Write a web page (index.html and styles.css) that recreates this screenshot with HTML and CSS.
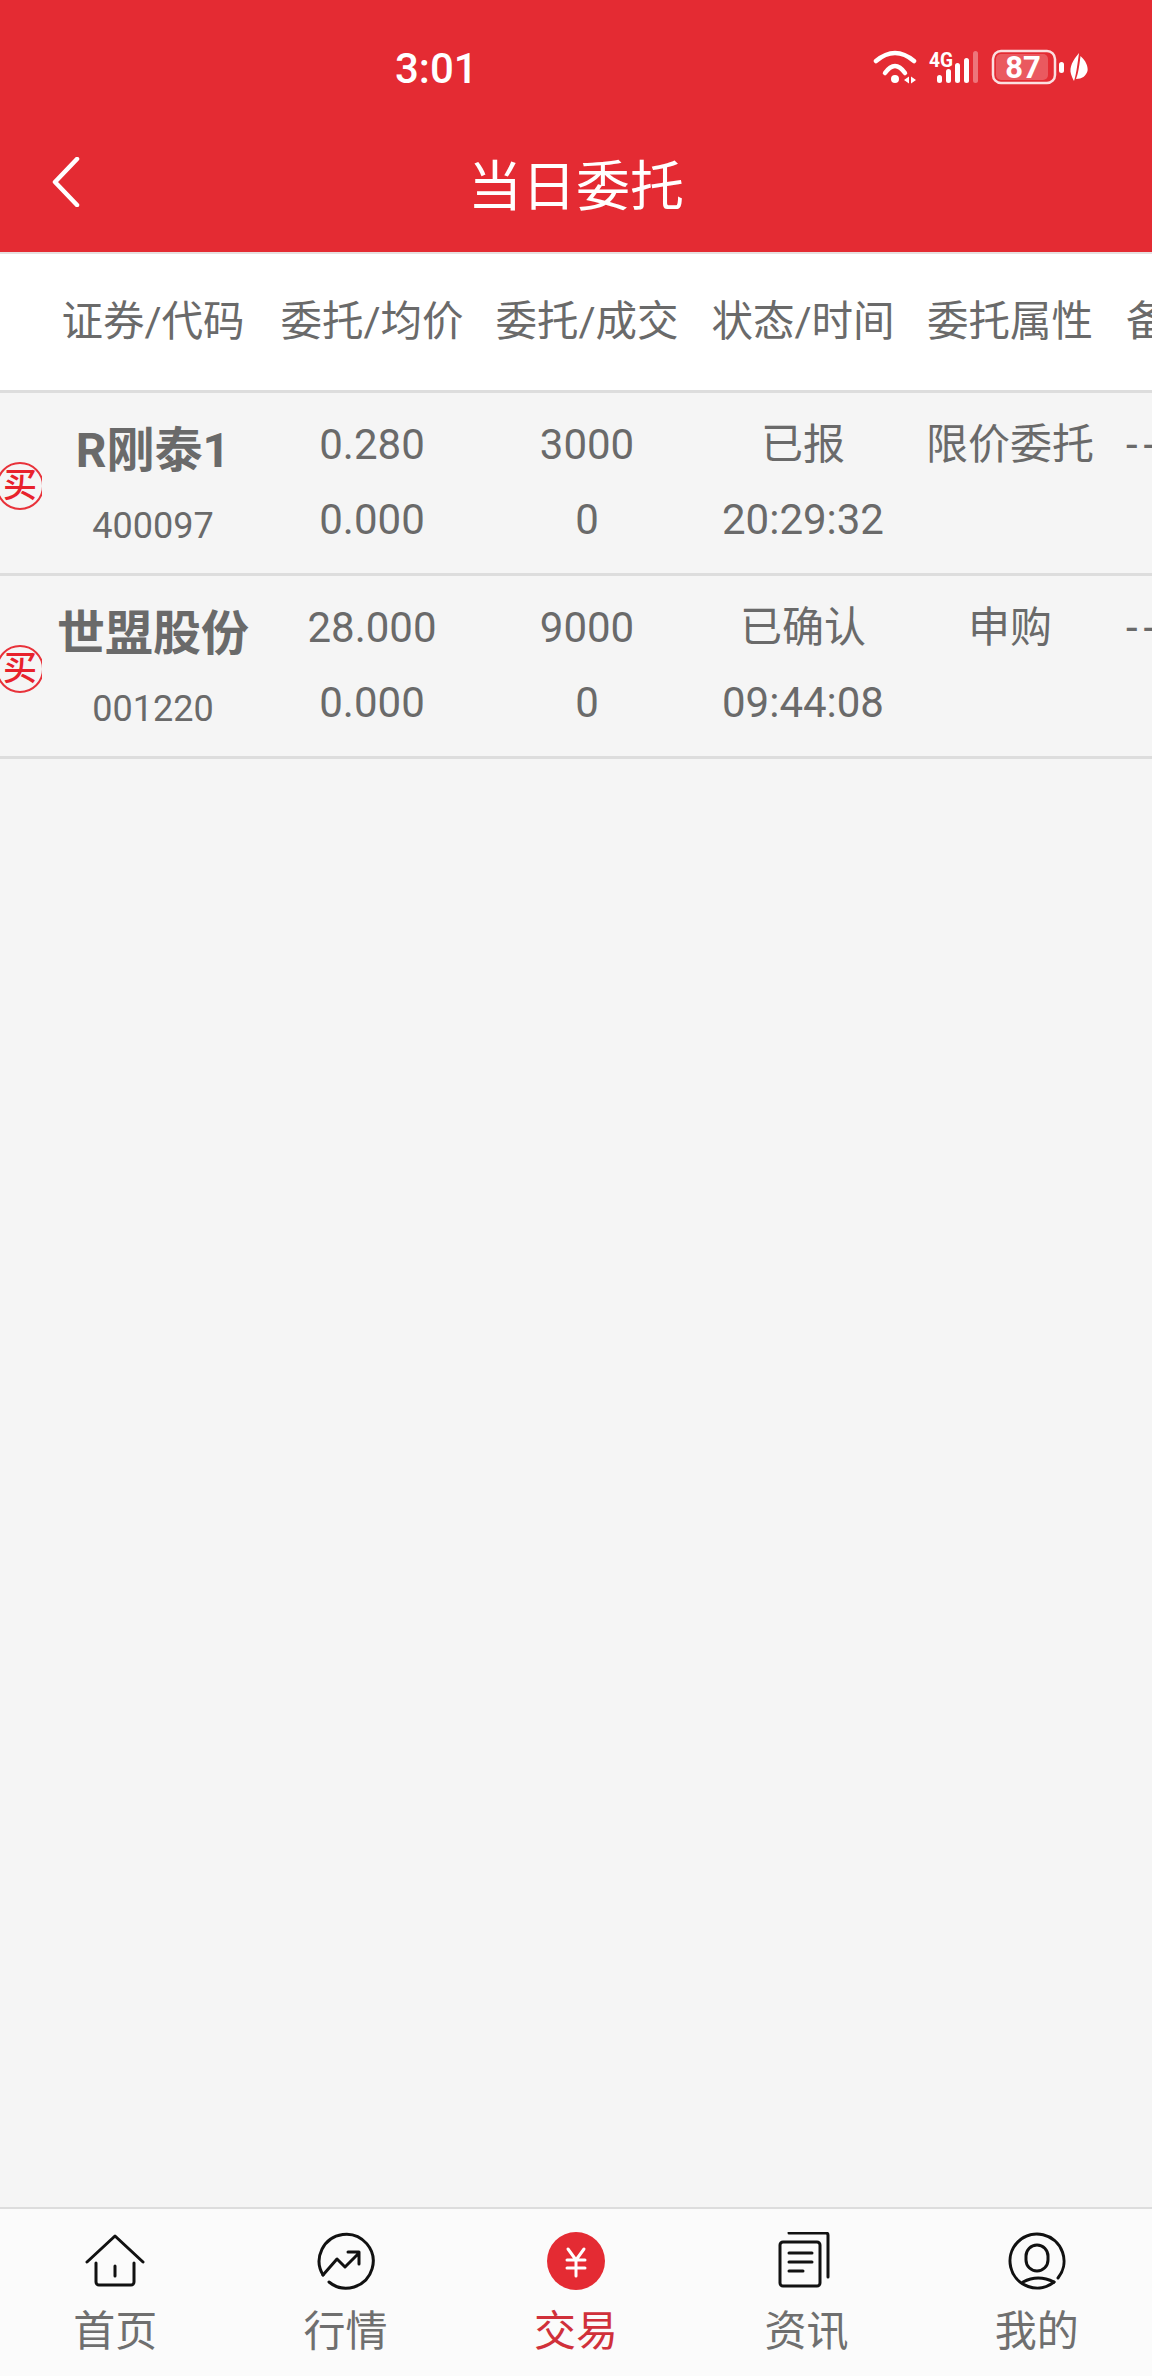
FILE: index.html
```html
<!DOCTYPE html>
<html lang="zh-CN">
<head>
    <meta charset="UTF-8">
    <meta name="viewport" content="width=device-width, initial-scale=1.0">
    <title>当日委托</title>
    <link rel="stylesheet" href="styles.css">
</head>
<body>
    <div class="page">
        <header class="topbar">
            <div class="status">
                <span class="clock">3:01</span>
                <svg class="status-icons" width="215" height="40" viewBox="0 0 215 40">
                    <g fill="none" stroke="#fff" stroke-width="4.5" stroke-linecap="round">
                        <path d="M3 13Q22 -3 41 13"/>
                        <path d="M12 25Q22 11 32 25"/>
                    </g>
                    <circle cx="22" cy="31" r="4" fill="#fff"/>
                    <path d="M31 32l5-3.5v7zM38 28.500v7l5-3.500z" fill="#fff"/>
                    <text class="net" x="56" y="19" textLength="24" lengthAdjust="spacingAndGlyphs">4G</text>
                    <g fill="#fff">
                        <rect x="64" y="27" width="5" height="8" rx="2.500"/>
                        <rect x="73" y="21" width="5" height="14" rx="2.500"/>
                        <rect x="82" y="15" width="5" height="20" rx="2.500"/>
                        <rect x="91" y="10" width="5" height="25" rx="2.500"/>
                        <rect x="100" y="3" width="5" height="32" rx="2.500" opacity=".35"/>
                    </g>
                    <rect x="123" y="6" width="52" height="26" rx="5" fill="#fff" opacity=".22"/>
                    <rect x="120" y="3" width="62" height="32" rx="8" fill="none" stroke="#fff" stroke-opacity=".85" stroke-width="2.500"/>
                    <text class="batt" x="150" y="30" text-anchor="middle">87</text>
                    <rect x="186" y="14" width="5" height="11" rx="2.500" fill="#fff"/>
                    <path d="M206 5C200 12 196 19 198 26C198.600 28.500 200 31 201 33C203 27 204 20 206 5Z" fill="#fff"/>
                    <path d="M207.500 8C206 20 205 26 203 31C209 31 213 28 214.500 23C215.500 17 211 11 207.500 8Z" fill="#fff"/>
                </svg>
            </div>
            <div class="navbar">
                <svg class="back" width="28" height="50" viewBox="0 0 28 50">
                    <path d="M25 2L3 25L25 48" fill="none" stroke="#fff" stroke-width="4.500" stroke-linecap="round" stroke-linejoin="round"/>
                </svg>
                <h1 class="title">当日委托</h1>
            </div>
        </header>

        <div class="thead cols">
            <span></span>
            <span>证券/代码</span>
            <span>委托/均价</span>
            <span>委托/成交</span>
            <span>状态/时间</span>
            <span>委托属性</span>
            <span class="extra">备注</span>
        </div>

        <div class="row cols">
            <div class="side"><span class="stamp">买</span></div>
            <div class="stock">
                <div class="stock-name">R刚泰1</div>
                <div class="stock-code">400097</div>
            </div>
            <div class="cell"><p>0.280</p><p>0.000</p></div>
            <div class="cell"><p>3000</p><p>0</p></div>
            <div class="cell"><p>已报</p><p>20:29:32</p></div>
            <div class="cell"><p>限价委托</p></div>
            <div class="cell extra"><p class="dash">--</p></div>
        </div>

        <div class="row cols">
            <div class="side"><span class="stamp">买</span></div>
            <div class="stock">
                <div class="stock-name">世盟股份</div>
                <div class="stock-code">001220</div>
            </div>
            <div class="cell"><p>28.000</p><p>0.000</p></div>
            <div class="cell"><p>9000</p><p>0</p></div>
            <div class="cell"><p>已确认</p><p>09:44:08</p></div>
            <div class="cell"><p>申购</p></div>
            <div class="cell extra"><p class="dash">--</p></div>
        </div>

        <nav class="tabbar">
            <a class="tab">
                <svg class="tab-icon" width="60" height="60" viewBox="0 0 60 60">
                    <path d="M2 30L30 4L58 30M11 31V50a3 3 0 0 0 3 3H46a3 3 0 0 0 3-3V31M30 34V44"/>
                </svg>
                <span>首页</span>
            </a>
            <a class="tab">
                <svg class="tab-icon" width="60" height="60" viewBox="0 0 60 60">
                    <path d="M7 43A27 27 0 1 1 13 50"/>
                    <path d="M7 43L21 27L29 35L43 21M32 20H43V32"/>
                </svg>
                <span>行情</span>
            </a>
            <a class="tab active">
                <svg class="tab-icon" width="60" height="60" viewBox="0 0 60 60">
                    <circle class="coin" cx="30" cy="29" r="29"/>
                    <path class="yen" d="M22 17L30 28L38 17M21 28H39M21 36H39M30 28V44"/>
                </svg>
                <span>交易</span>
            </a>
            <a class="tab">
                <svg class="tab-icon" width="60" height="60" viewBox="0 0 60 60">
                    <rect x="4" y="10" width="40" height="44" rx="3"/>
                    <path d="M13 1H50a2 2 0 0 1 2 2V45M13 21H36M13 30H36M13 39H27"/>
                </svg>
                <span>资讯</span>
            </a>
            <a class="tab">
                <svg class="tab-icon" width="60" height="60" viewBox="0 0 60 60">
                    <path d="M51 46A27 27 0 1 0 47 50"/>
                    <path d="M16 50Q31 42 47 50"/>
                    <rect x="19" y="13" width="22" height="26" rx="11"/>
                </svg>
                <span>我的</span>
            </a>
        </nav>
    </div>
</body>
</html>
```

FILE: styles.css
```css
* {
    box-sizing: border-box;
}
body {
    margin: 0;
    background-color: #f5f5f5;
    color: #6a6a6a;
    font-family: Roboto, "Noto Sans CJK SC", sans-serif;
    font-size: 42px;
    overflow: hidden;
}
.page {
    display: flex;
    flex-direction: column;
    height: 100vh;
}

/* red header */
.topbar {
    background-color: #e42b33;
    color: white;
    height: 252px;
}
.status {
    display: flex;
    align-items: center;
    height: 114px;
    padding: 22px 64px 0 395px;
}
.clock {
    font-size: 42px;
    font-weight: 500;
}
.status-icons {
    margin-left: auto;
}
.net {
    fill: white;
    font-size: 20px;
    font-weight: 700;
}
.batt {
    fill: white;
    font-size: 31px;
    font-weight: 700;
}
.navbar {
    display: grid;
    grid-template-columns: 1fr auto 1fr;
    align-items: center;
    height: 136px;
    padding: 0 52px;
}
.title {
    margin: 0;
    font-size: 54px;
    font-weight: 400;
}

/* table */
.cols {
    display: grid;
    grid-template-columns: 44px 218px 220px 210px 222px 192px 20px 1fr;
    text-align: center;
    white-space: nowrap;
}
.thead {
    align-items: center;
    height: 141px;
    padding-bottom: 9px;
    background-color: white;
    border-top: 2px solid #e6e0e0;
    border-bottom: 3px solid #ddd;
    font-size: 41.500px;
}
.thead .extra {
    grid-column: 8;
    text-align: left;
}
.row {
    height: 183px;
    padding: 14px 0 16px;
    border-bottom: 3px solid #ddd;
}
.row .extra {
    grid-column: 8;
    text-align: left;
}
.side {
    overflow: hidden;
    width: 42px;
    align-self: center;
    padding-top: 2px;
}
.stamp {
    display: block;
    width: 48px;
    height: 48px;
    margin-left: -4px;
    border: 2px solid #e8323a;
    border-radius: 50%;
    color: #e8222c;
    font-size: 34px;
    font-weight: 500;
    line-height: 42px;
}
.stock {
    padding-top: 3px;
}
.stock-name {
    font-size: 48px;
    font-weight: 700;
    line-height: 81px;
}
.stock-code {
    font-size: 36px;
    line-height: 71px;
}
.cell p {
    margin: 0;
    line-height: 75px;
}
.cell .dash {
    letter-spacing: 6px;
}

/* bottom tabs */
.tabbar {
    display: grid;
    grid-template-columns: repeat(5, 1fr);
    margin-top: auto;
    height: 169px;
    padding-top: 23px;
    background-color: #fbfbfb;
    border-top: 2px solid #ddd;
    text-align: center;
    color: #6f6f6f;
}
.tab {
    display: flex;
    flex-direction: column;
    align-items: center;
}
.tab span {
    line-height: 70px;
    margin-top: 5px;
}
.tab-icon {
    fill: none;
    stroke: #111;
    stroke-width: 3;
    stroke-linecap: round;
    stroke-linejoin: round;
}
.tab.active {
    color: #d0303a;
}
.coin {
    fill: #e42b33;
    stroke: none;
}
.yen {
    stroke: white;
}
```
